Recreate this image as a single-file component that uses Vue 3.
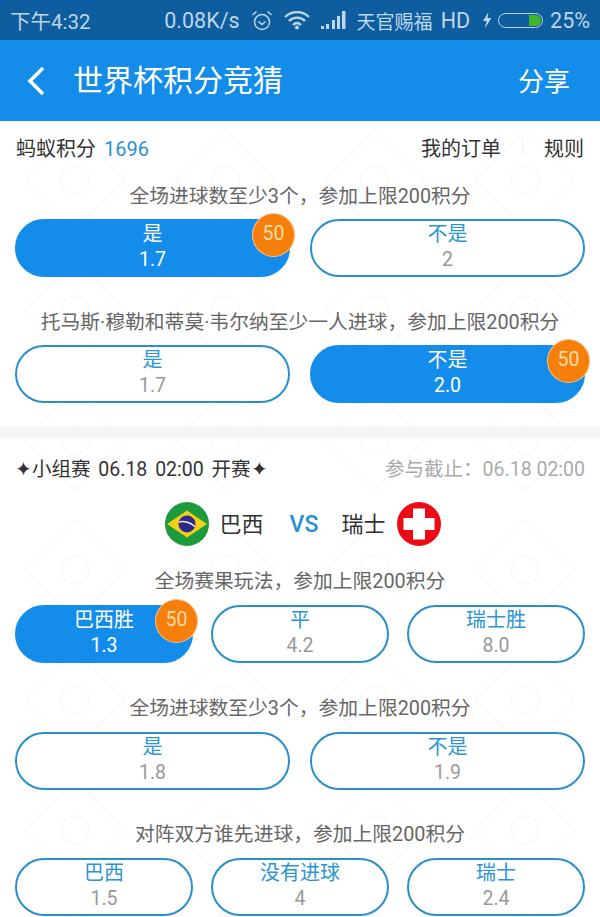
<script setup>
const firstBets = [
  {
    title: '全场进球数至少3个，参加上限200积分',
    options: [
      { name: '是', odds: '1.7', stake: 50 },
      { name: '不是', odds: '2' }
    ]
  },
  {
    title: '托马斯·穆勒和蒂莫·韦尔纳至少一人进球，参加上限200积分',
    options: [
      { name: '是', odds: '1.7' },
      { name: '不是', odds: '2.0', stake: 50 }
    ]
  }
]

const matchBets = [
  {
    title: '全场赛果玩法，参加上限200积分',
    options: [
      { name: '巴西胜', odds: '1.3', stake: 50 },
      { name: '平', odds: '4.2' },
      { name: '瑞士胜', odds: '8.0' }
    ]
  },
  {
    title: '全场进球数至少3个，参加上限200积分',
    options: [
      { name: '是', odds: '1.8' },
      { name: '不是', odds: '1.9' }
    ]
  },
  {
    title: '对阵双方谁先进球，参加上限200积分',
    options: [
      { name: '巴西', odds: '1.5' },
      { name: '没有进球', odds: '4' },
      { name: '瑞士', odds: '2.4' }
    ]
  }
]
</script>

<template>
  <div class="page">
    <svg class="watermark" width="600" height="800" aria-hidden="true">
      <defs>
        <pattern id="wm" width="150" height="130" patternUnits="userSpaceOnUse">
          <path d="M75 5 L125 55 L75 105 L25 55 Z" fill="none" stroke="#f9fafa" stroke-width="2.5" />
          <circle cx="75" cy="55" r="14" fill="none" stroke="#fafafb" stroke-width="2.5" />
        </pattern>
      </defs>
      <rect width="600" height="800" fill="url(#wm)" />
    </svg>

    <div class="status-bar">
      <span class="time">下午4:32</span>
      <div class="status-right">
        <span>0.08K/s</span>
        <svg width="22" height="21" viewBox="0 0 22 21" fill="none" stroke="#bcd6ea" stroke-width="1.5">
          <circle cx="11" cy="12" r="7.5" />
          <path d="M7.5 11.5 L11 14.5 L14.5 11.5" />
          <path d="M1.5 5 L5.5 1.5 M20.5 5 L16.5 1.5" />
        </svg>
        <svg width="26" height="20" viewBox="0 0 26 20" fill="none" stroke="#bcd6ea" stroke-width="2.4">
          <path d="M1 7 C7.5 0.5 18.5 0.5 25 7" />
          <path d="M5 11 C9.5 6.5 16.5 6.5 21 11" />
          <path d="M9 15 C11.5 12.5 14.5 12.5 17 15" />
          <circle cx="13" cy="17.5" r="2" fill="#bcd6ea" stroke="none" />
        </svg>
        <svg width="25" height="18" viewBox="0 0 25 18" fill="#bcd6ea">
          <rect x="0" y="15" width="3" height="3" />
          <rect x="5" y="13" width="3" height="5" />
          <rect x="11" y="9" width="3" height="9" />
          <rect x="16" y="5" width="3" height="13" />
          <rect x="21" y="0" width="3.5" height="18" />
        </svg>
        <span class="carrier">天官赐福</span>
        <span class="hd">HD</span>
        <svg class="bolt" width="10" height="16" viewBox="0 0 10 16" fill="#bcd6ea">
          <path d="M6.5 0 L1 9 H4.5 L3 16 L9.5 6 H5.5 Z" />
        </svg>
        <span class="battery"><i></i></span>
        <span class="percent">25%</span>
      </div>
    </div>

    <header class="nav">
      <svg class="back" width="20" height="30" viewBox="0 0 20 30" fill="none" stroke="#fff" stroke-width="3.6">
        <path d="M17 2 L4 15 L17 28" />
      </svg>
      <h1>世界杯积分竞猜</h1>
      <span class="share">分享</span>
    </header>

    <section class="first">
      <div class="points">
        <span>蚂蚁积分<b>1696</b></span>
        <div class="links">
          <span>我的订单</span>
          <i></i>
          <span>规则</span>
        </div>
      </div>
      <div v-for="bet in firstBets" :key="bet.title" class="bet">
        <p class="question">{{ bet.title }}</p>
        <div class="options">
          <div v-for="opt in bet.options" :key="opt.name" class="option" :class="{ picked: opt.stake }">
            <span class="name">{{ opt.name }}</span>
            <span class="odds">{{ opt.odds }}</span>
            <span v-if="opt.stake" class="stake">{{ opt.stake }}</span>
          </div>
        </div>
      </div>
    </section>

    <div class="divider"></div>

    <section class="match">
      <div class="match-head">
        <span class="stage">✦小组赛 06.18 02:00 开赛✦</span>
        <span class="deadline">参与截止：06.18 02:00</span>
      </div>
      <div class="teams">
        <svg width="44" height="44" viewBox="0 0 44 44">
          <circle cx="22" cy="22" r="22" fill="#1d9a3c" />
          <path d="M2 22 L22 8.5 L42 22 L22 35.5 Z" fill="#f2cf18" />
          <circle cx="22" cy="22" r="8.5" fill="#2c2a86" />
          <path d="M14 20 C18 18.5 25 20 30 24.5" fill="none" stroke="#e8e8f2" stroke-width="1.5" />
        </svg>
        <span class="team home">巴西</span>
        <span class="vs">VS</span>
        <span class="team away">瑞士</span>
        <svg width="44" height="44" viewBox="0 0 44 44">
          <circle cx="22" cy="22" r="22" fill="#ee0a14" />
          <path d="M16 6.5 H28 V16 H37.5 V28 H28 V37.5 H16 V28 H6.5 V16 H16 Z" fill="#fff" />
        </svg>
      </div>
      <div v-for="bet in matchBets" :key="bet.title" class="bet">
        <p class="question">{{ bet.title }}</p>
        <div class="options" :class="{ three: bet.options.length === 3 }">
          <div v-for="opt in bet.options" :key="opt.name" class="option" :class="{ picked: opt.stake }">
            <span class="name">{{ opt.name }}</span>
            <span class="odds">{{ opt.odds }}</span>
            <span v-if="opt.stake" class="stake">{{ opt.stake }}</span>
          </div>
        </div>
      </div>
    </section>
  </div>
</template>

<style>
html, body {
  margin: 0;
  background: #fff;
  overflow: hidden;
}
</style>

<style scoped>
.page {
  position: relative;
  width: 600px;
  height: 917px;
  overflow: hidden;
  background: #fff;
  font-family: Roboto, "Noto Sans CJK SC", sans-serif;
  color: #333;
}

.watermark {
  position: absolute;
  left: 0;
  top: 125px;
}

.status-bar {
  position: relative;
  height: 40px;
  box-sizing: border-box;
  padding: 0 10px;
  display: flex;
  align-items: center;
  justify-content: space-between;
  background: #0e5d9e;
  color: #bcd6ea;
  font-size: 20.5px;
}

.status-right {
  display: flex;
  align-items: center;
  gap: 11px;
  font-size: 21.5px;
}

.carrier {
  font-size: 19px;
}

.hd {
  margin-left: -3px;
}

.bolt {
  margin-left: 1px;
}

.battery {
  width: 45px;
  height: 15px;
  box-sizing: border-box;
  padding: 1px;
  border: 1.5px solid #bcd6ea;
  border-radius: 8px;
  display: flex;
  justify-content: flex-end;
  margin-left: -5px;
}

.battery i {
  width: 12px;
  background: #43b52a;
  border-radius: 0 6px 6px 0;
}

.percent {
  margin-left: -4px;
}

.nav {
  position: relative;
  height: 81px;
  box-sizing: border-box;
  padding: 0 30px 0 26px;
  display: flex;
  align-items: center;
  background: #148cea;
  color: #fff;
}

.nav h1 {
  margin: 0 0 0 27px;
  padding-bottom: 5px;
  font-size: 30px;
  font-weight: 400;
}

.share {
  margin-left: auto;
  padding-bottom: 2px;
  font-size: 26px;
}

section {
  position: relative;
}

.first {
  height: 306px;
}

.points {
  height: 54px;
  box-sizing: border-box;
  padding: 0 16px 2px;
  margin-bottom: 5px;
  display: flex;
  align-items: center;
  justify-content: space-between;
  font-size: 20px;
}

.points b {
  margin-left: 8px;
  font-weight: 400;
  color: #2b8fd0;
}

.links {
  display: flex;
  align-items: center;
}

.links i {
  width: 1px;
  height: 16px;
  margin: 0 21px;
  background: #eee;
}

.divider {
  position: relative;
  height: 11px;
  background: #f4f4f4;
}

.match-head {
  height: 60px;
  box-sizing: border-box;
  padding: 0 15px 2px;
  display: flex;
  align-items: center;
  justify-content: space-between;
  font-size: 19.5px;
}

.stage {
  word-spacing: 3px;
}

.deadline {
  color: #aaa;
}

.teams {
  height: 52px;
  margin-bottom: 15px;
  padding-left: 6px;
  display: flex;
  align-items: center;
  justify-content: center;
}

.team {
  padding-bottom: 5px;
  font-size: 22px;
}

.home {
  margin: 0 26px 0 11px;
}

.away {
  margin: 0 12px 0 23px;
}

.vs {
  font-size: 23px;
  font-weight: 500;
  color: #2b8fd0;
}

.bet {
  padding: 0 15px;
}

.question {
  margin: 0 0 9px;
  height: 30px;
  line-height: 33px;
  text-align: center;
  font-size: 19.8px;
  color: #666;
}

.match .question {
  margin-bottom: 10px;
}

.options {
  display: grid;
  grid-template-columns: 275px 275px;
  justify-content: space-between;
  padding-bottom: 29px;
}

.match .options {
  padding-bottom: 28.5px;
}

.options.three {
  grid-template-columns: 178px 178px 178px;
}

.option {
  position: relative;
  height: 58px;
  box-sizing: border-box;
  padding-bottom: 2px;
  border: 2px solid #2b8fcb;
  border-radius: 29px;
  background: #fff;
  display: flex;
  flex-direction: column;
  align-items: center;
  justify-content: center;
}

.name {
  font-size: 20px;
  line-height: 25px;
  color: #2b95d6;
}

.odds {
  font-size: 19.5px;
  line-height: 25px;
  color: #999;
}

.option.picked {
  background: #148cea;
  border-color: #148cea;
}

.picked .name,
.picked .odds {
  color: #fff;
}

.stake {
  position: absolute;
  top: -8px;
  right: -7px;
  width: 43px;
  height: 44px;
  box-sizing: border-box;
  border: 1.5px solid #f8c08c;
  border-radius: 50%;
  background: #f67e0a;
  color: #fbdca8;
  font-size: 19.5px;
  line-height: 40px;
  text-align: center;
}
</style>
